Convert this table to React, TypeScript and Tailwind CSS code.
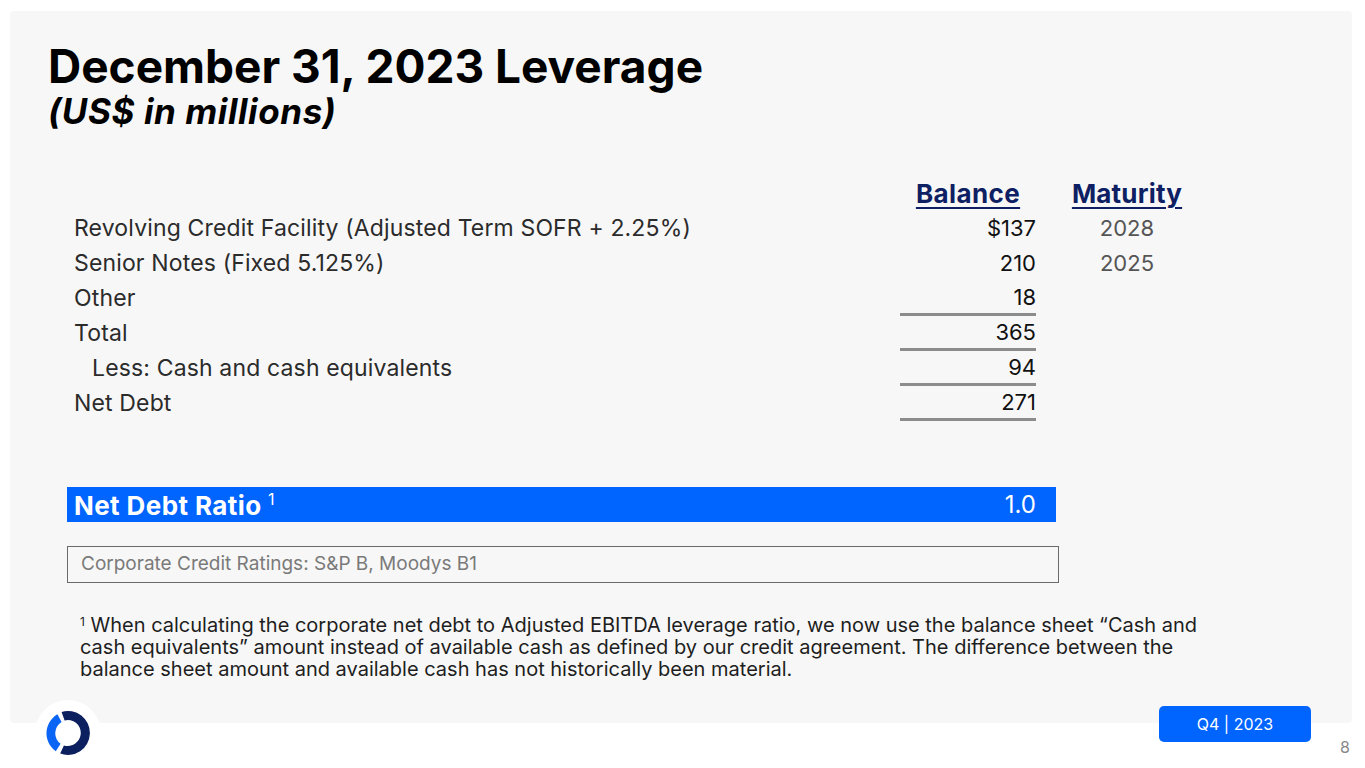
import React from 'react';

type Row = {
  label: string;
  balance: string;
  maturity?: string;
  indent?: boolean;
  rule?: boolean;
};

const rows: Row[] = [
  { label: 'Revolving Credit Facility (Adjusted Term SOFR + 2.25%)', balance: '$137', maturity: '2028' },
  { label: 'Senior Notes (Fixed 5.125%)', balance: '210', maturity: '2025' },
  { label: 'Other', balance: '18', rule: true },
  { label: 'Total', balance: '365', rule: true },
  { label: 'Less: Cash and cash equivalents', balance: '94', indent: true, rule: true },
  { label: 'Net Debt', balance: '271', rule: true },
];

const font = { fontFamily: 'Inter, "Noto Sans", sans-serif' };

const Logo: React.FC = () => (
  <div className="w-[66px] h-[66px] rounded-full bg-white flex items-center justify-center">
    <svg width="50" height="50" viewBox="0 0 50 50">
      {/* navy arc, right side */}
      <path
        d="M18.6 3.9 A22 22 0 1 1 17.2 45.6 L20.9 37.4 A13 13 0 1 0 21.6 12.4 Z"
        fill="#0c1f5e"
      />
      {/* blue arc, left side */}
      <path
        d="M14.4 6.3 A22 22 0 0 0 12.8 43.3 L17.6 35.8 A13 13 0 0 1 18.6 14.1 Z"
        fill="#0a64f5"
      />
    </svg>
  </div>
);

const App: React.FC = () => {
  return (
    <div className="w-[1365px] h-[768px] bg-white pt-[11px] pl-[10px] pr-[13px] overflow-hidden" style={font}>
      <div className="h-[712px] bg-[#f7f7f7] rounded-[4px] pl-[38px] pt-[28px]">
        <h1 className="text-[46px] leading-[54px] font-bold text-black">December 31, 2023 Leverage</h1>
        <h2 className="text-[35px] leading-[40px] font-bold italic text-black -mt-[2px] tracking-[0.6px]">(US$ in millions)</h2>

        <div className="ml-[26px] mt-[45px] w-[1144px]">
          <div className="flex h-[35px] items-center">
            <div className="flex-1" />
            <div className="w-[136px] text-center text-[26px] font-bold text-[#0e1f63] underline underline-offset-[4px] decoration-[2px] tracking-[0.4px]">Balance</div>
            <div className="w-[182px] text-center text-[26px] font-bold text-[#0e1f63] underline underline-offset-[4px] decoration-[2px] tracking-[0.2px]">Maturity</div>
          </div>
          {rows.map((r) => (
            <div key={r.label} className="flex h-[35px] items-center text-[22px] text-[#2b2b2b]">
              <div className={`flex-1 text-[23px] tracking-[0.15px] ${r.indent ? 'pl-[18px]' : ''}`}>{r.label}</div>
              <div className={`w-[136px] h-full flex items-center justify-end text-[#111] ${r.rule ? 'border-b-[3px] border-[#8c8c8c]' : ''}`}>
                {r.balance}
              </div>
              <div className="w-[182px] text-center text-[#555]">{r.maturity ?? ''}</div>
            </div>
          ))}
        </div>

        <div className="ml-[19px] mt-[66px] w-[989px] h-[35px] bg-[#0064ff] flex items-center justify-between pl-[7px] pr-[20px] text-white">
          <div className="text-[26px] font-bold tracking-[0.4px] leading-none">
            Net Debt Ratio <span className="text-[16px] font-normal align-[10px]">1</span>
          </div>
          <div className="text-[24px]">1.0</div>
        </div>

        <div className="ml-[19px] mt-[24px] w-[992px] h-[37px] border-[1.5px] border-[#6b6b6b] flex items-center pl-[13px] text-[19px] text-[#7a7a7a]">
          Corporate Credit Ratings: S&amp;P B, Moodys B1
        </div>

        <p className="ml-[32px] mt-[31px] w-[1130px] text-[20px] leading-[22px] text-[#1e1e1e]">
          <span className="text-[12px] leading-none align-[6px]">1</span> When calculating the corporate net debt to Adjusted EBITDA leverage ratio, we now use the balance sheet “Cash and cash equivalents” amount instead of available cash as defined by our credit agreement. The difference between the balance sheet amount and available cash has not historically been material.
        </p>
      </div>

      <div className="flex items-start -mt-[23px] pl-[25px]">
        <Logo />
        <div className="flex-1" />
        <div className="mt-[6px] w-[152px] h-[36px] bg-[#0064ff] rounded-[5px] flex items-center justify-center text-white text-[16px]">Q4 | 2023</div>
        <div className="w-[41px] mt-[35px] text-right text-[16px] text-[#888] pr-[2px]">8</div>
      </div>
    </div>
  );
};

export default App;
